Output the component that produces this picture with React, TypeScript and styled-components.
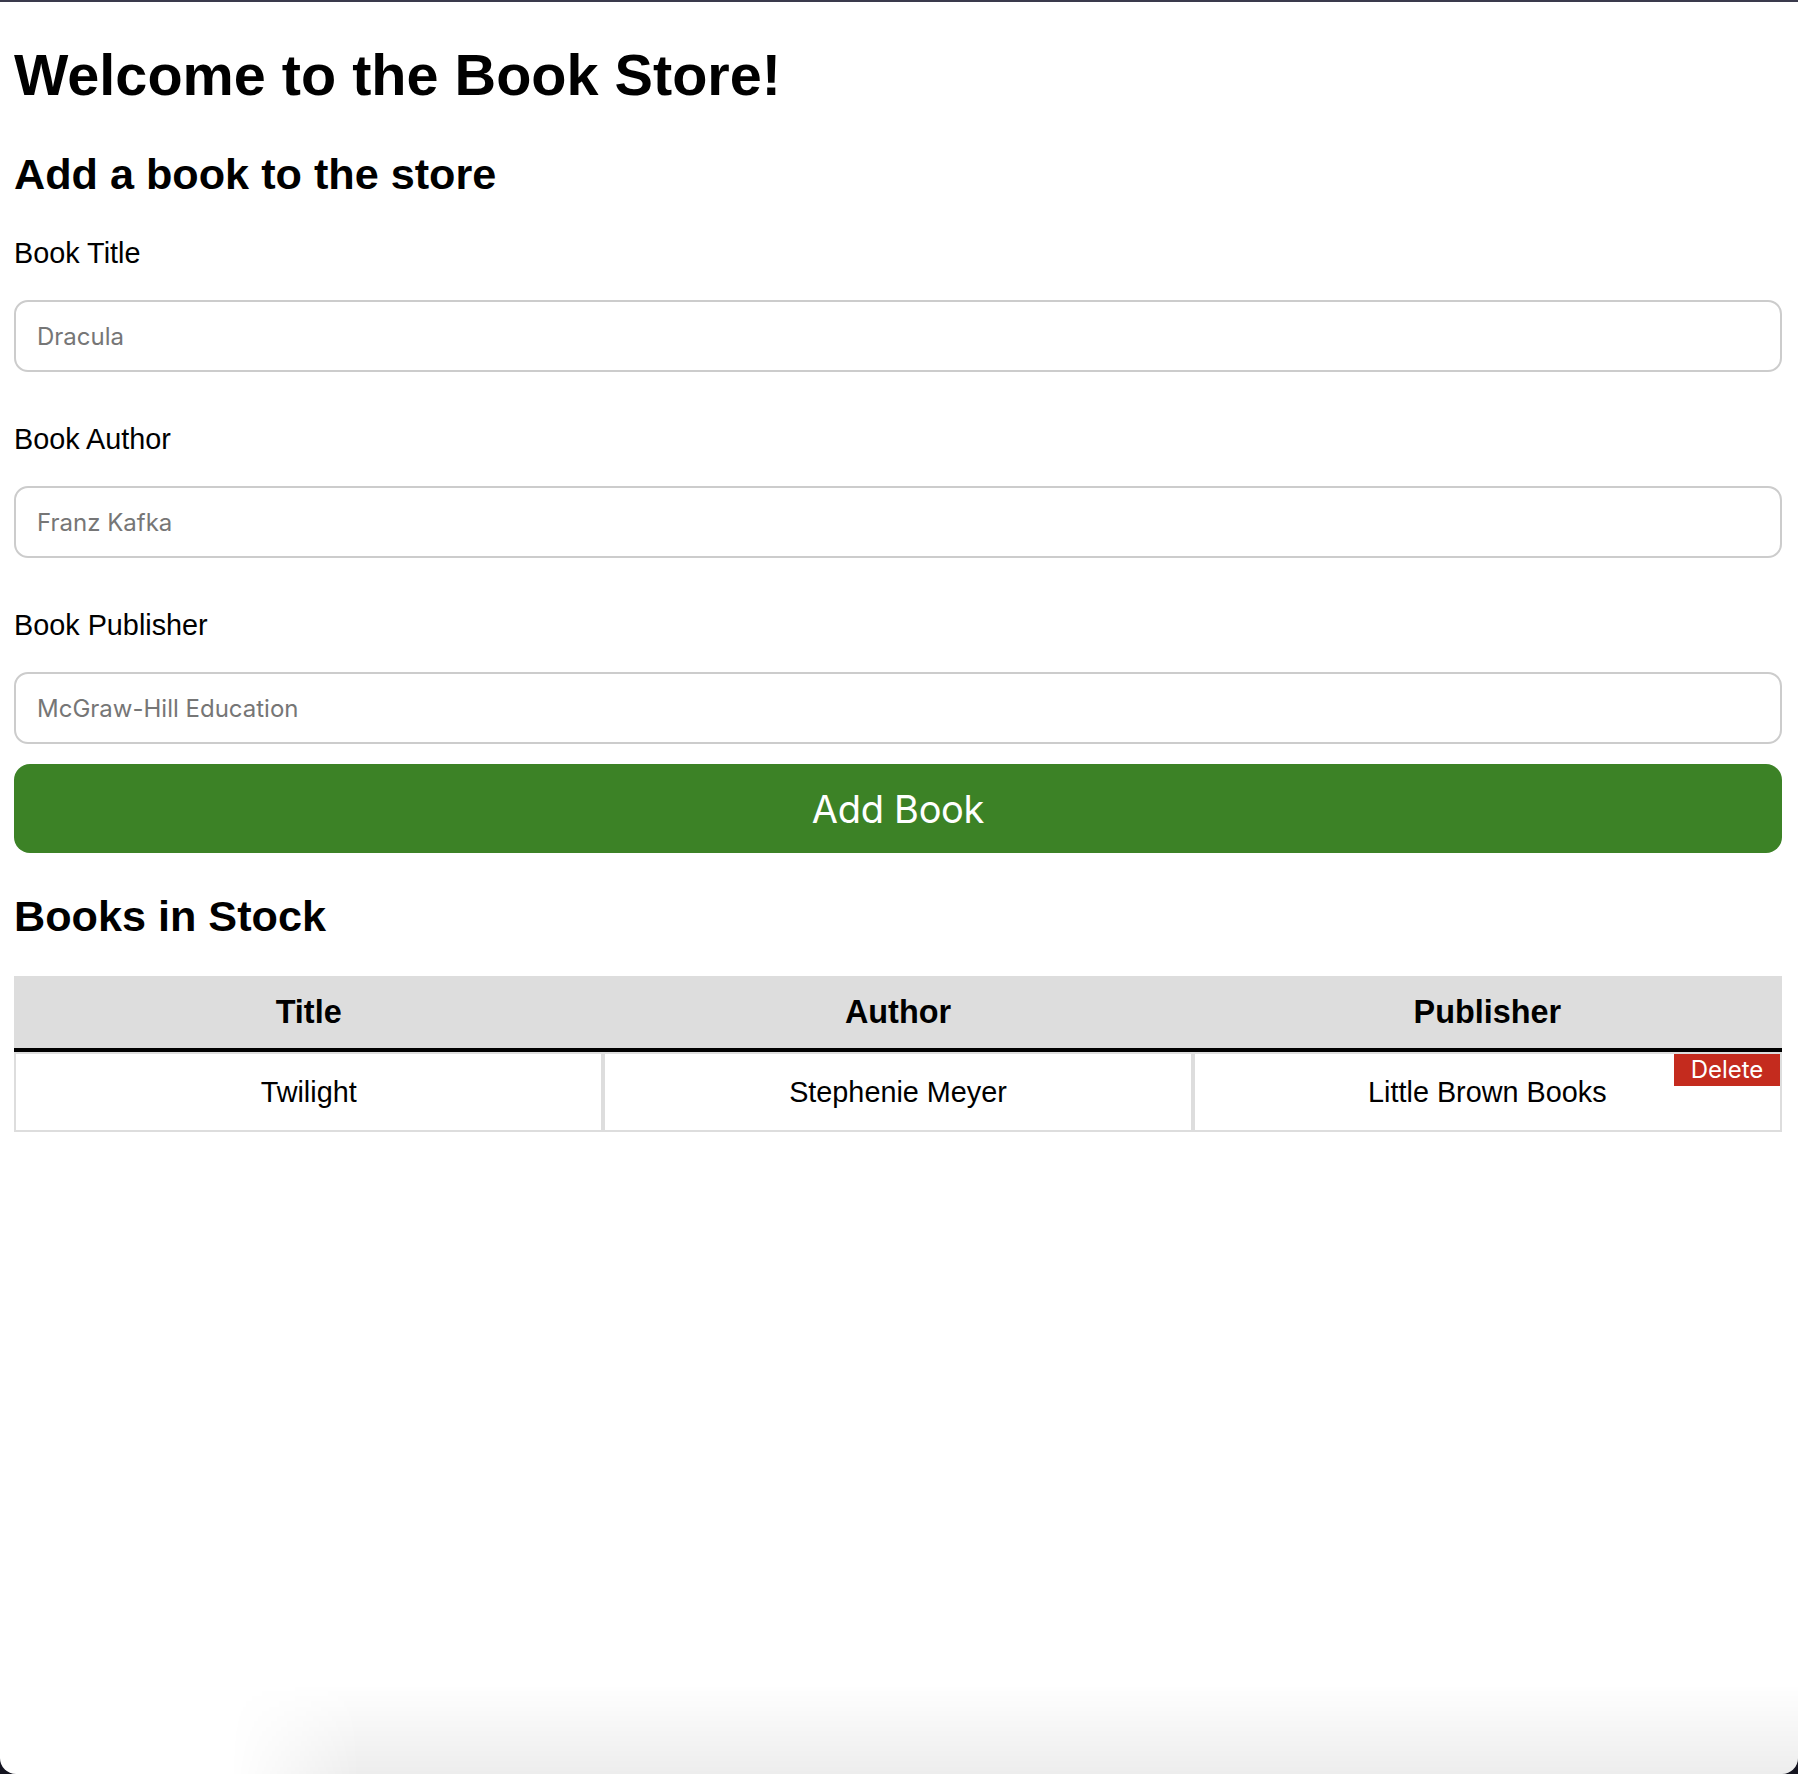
import React from "react";
import styled, { createGlobalStyle } from "styled-components";

const GlobalStyle = createGlobalStyle`
  html, body {
    margin: 0;
    padding: 0;
    background: #ffffff;
  }
  body {
    font-family: "Liberation Sans", Arial, Helvetica, sans-serif;
    color: #000;
  }
  * { box-sizing: border-box; }
`;

const Page = styled.main`
  display: flex;
  flex-direction: column;
  padding: 42px 16px 0 14px;
  min-height: 1774px;
`;

const Title = styled.h1`
  margin: 0;
  font-size: 57.6px;
  line-height: 66px;
  font-weight: 700;
`;

const SectionTitle = styled.h2<{ $top: number }>`
  margin: ${(p) => p.$top}px 0 0;
  font-size: 43.2px;
  line-height: 50px;
  font-weight: 700;
`;

const Form = styled.form`
  display: flex;
  flex-direction: column;
  margin-top: 38px;
`;

const Field = styled.div<{ $last?: boolean }>`
  display: flex;
  flex-direction: column;
  gap: 30px;
  margin-bottom: ${(p) => (p.$last ? 20 : 51)}px;
`;

const Label = styled.label`
  font-size: 28.8px;
  line-height: 33px;
`;

const Input = styled.input`
  height: 72px;
  width: 100%;
  border: 2px solid #cccccc;
  border-radius: 14px;
  padding: 0 21px;
  font-family: Inter, "Noto Sans", sans-serif;
  font-size: 24px;
  color: #222;
  background: #fff;
  outline: none;
  &::placeholder {
    color: #767676;
  }
`;

const AddButton = styled.button`
  height: 89px;
  width: 100%;
  border: none;
  border-radius: 16px;
  background: #3c8226;
  color: #ffffff;
  font-family: Inter, "Noto Sans", sans-serif;
  font-size: 38px;
  font-weight: 400;
  letter-spacing: -0.3px;
  cursor: pointer;
`;

const Table = styled.table`
  margin-top: 35px;
  width: 100%;
  border-collapse: separate;
  border-spacing: 0;
  table-layout: fixed;
`;

const HeadCell = styled.th`
  height: 76px;
  background: #dddddd;
  border-bottom: 4px solid #000;
  font-size: 32.4px;
  font-weight: 700;
  text-align: center;
  vertical-align: middle;
  padding: 0;
`;

const Cell = styled.td`
  position: relative;
  height: 80px;
  border: 2px solid #dddddd;
  font-size: 28.8px;
  text-align: center;
  vertical-align: middle;
  padding: 0;
`;

const DeleteButton = styled.button`
  position: absolute;
  top: 0;
  right: 0;
  width: 106px;
  height: 32px;
  border: none;
  border-radius: 0;
  background: #c42b1e;
  color: #fff;
  font-family: Inter, "Noto Sans", sans-serif;
  font-size: 24px;
  line-height: 32px;
  padding: 0;
  cursor: pointer;
`;

const WindowFrame = styled.div`
  position: fixed;
  inset: 0;
  pointer-events: none;
  border-top: 2px solid #3a3a4c;
  border-radius: 0 0 16px 16px;
  box-shadow: 0 0 0 40px #141420;
`;

const BottomShade = styled.div`
  position: fixed;
  left: 0;
  right: 0;
  bottom: 0;
  height: 90px;
  pointer-events: none;
  background: linear-gradient(to bottom, rgba(0, 0, 0, 0), rgba(0, 0, 0, 0.07));
  -webkit-mask-image: linear-gradient(to right, transparent 230px, #000 360px);
  mask-image: linear-gradient(to right, transparent 230px, #000 360px);
  border-radius: 0 0 16px 16px;
`;

const fields = [
  { id: "title", label: "Book Title", placeholder: "Dracula" },
  { id: "author", label: "Book Author", placeholder: "Franz Kafka" },
  { id: "publisher", label: "Book Publisher", placeholder: "McGraw-Hill Education" },
];

const books = [{ title: "Twilight", author: "Stephenie Meyer", publisher: "Little Brown Books" }];

export default function App() {
  return (
    <>
      <GlobalStyle />
      <Page>
        <Title>Welcome to the Book Store!</Title>
        <SectionTitle $top={41}>Add a book to the store</SectionTitle>
        <Form onSubmit={(e) => e.preventDefault()}>
          {fields.map((f, i) => (
            <Field key={f.id} $last={i === fields.length - 1}>
              <Label htmlFor={f.id}>{f.label}</Label>
              <Input id={f.id} placeholder={f.placeholder} />
            </Field>
          ))}
          <AddButton type="submit">Add Book</AddButton>
        </Form>
        <SectionTitle $top={38}>Books in Stock</SectionTitle>
        <Table>
          <thead>
            <tr>
              <HeadCell>Title</HeadCell>
              <HeadCell>Author</HeadCell>
              <HeadCell>Publisher</HeadCell>
            </tr>
          </thead>
          <tbody>
            {books.map((b) => (
              <tr key={b.title}>
                <Cell>{b.title}</Cell>
                <Cell>{b.author}</Cell>
                <Cell>
                  {b.publisher}
                  <DeleteButton type="button">Delete</DeleteButton>
                </Cell>
              </tr>
            ))}
          </tbody>
        </Table>
      </Page>
      <BottomShade />
      <WindowFrame />
    </>
  );
}
